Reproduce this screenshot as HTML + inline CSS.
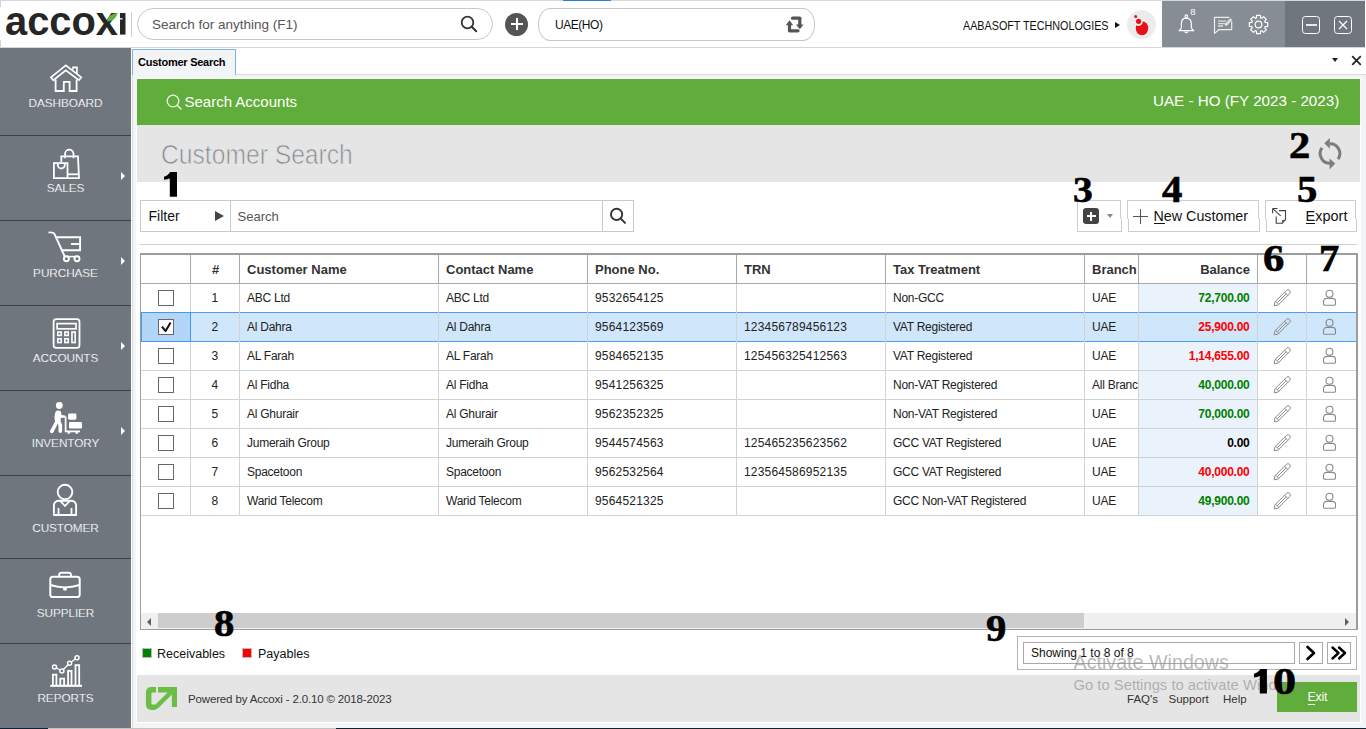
<!DOCTYPE html>
<html><head><meta charset="utf-8">
<style>
*{box-sizing:border-box;margin:0;padding:0}
html,body{width:1366px;height:729px;overflow:hidden;background:#fff;font-family:"Liberation Sans",sans-serif;color:#222}
.a{position:absolute}
.t{position:absolute;white-space:nowrap;line-height:1}
/* header */
#hdr{left:0;top:0;width:1366px;height:48px;background:#fff;border-bottom:1px solid #d6d6d6}
/* sidebar */
#side{left:0;top:48px;width:131px;height:680px;background:#6f767e}
.sep{position:absolute;left:0;width:131px;height:1px;background:#3d4247}
.slab{position:absolute;left:0;width:131px;text-align:center;color:#fff;font-size:11.8px;letter-spacing:-0.1px;-webkit-text-stroke:0.15px #6f767e;line-height:1;white-space:nowrap}
.sarr{position:absolute;left:121px;width:0;height:0;border-top:4px solid transparent;border-bottom:4px solid transparent;border-left:4px solid #fff}
.big{position:absolute;font-family:"Liberation Serif",serif;font-weight:bold;color:#000;line-height:1;white-space:nowrap;-webkit-text-stroke:0.6px #000}
.cell{position:absolute;white-space:nowrap;line-height:1;font-size:12px;letter-spacing:-0.25px;color:#222}
</style></head><body>

<!-- HEADER -->
<div id="hdr" class="a"></div>
<div class="a" style="left:0;top:0;width:1366px;height:1px;background:#d9d9d9"></div>
<div class="a" style="left:563px;top:0;width:48px;height:1px;background:#2d7fd6"></div>
<div class="a" style="left:0;top:0;width:1px;height:7px;background:#d4d4d4"></div><div class="a" style="left:0;top:40px;width:1px;height:7px;background:#d4d4d4"></div>

<!-- logo -->
<svg class="a" style="left:0;top:0" width="135" height="47" viewBox="0 0 135 47">
  <text x="5" y="34.6" font-family="Liberation Sans" font-weight="bold" font-size="41" fill="#262626" textLength="113" lengthAdjust="spacingAndGlyphs">accox</text>
  <path d="M120 13 h5.5 v21.6 h-5.5 z" fill="#262626"/><rect x="119.5" y="18.2" width="3" height="1.3" fill="#fff"/>
  <path d="M107 21.5 C108 16 112 13.5 117.5 13 C116.5 18 113 21 107 21.5 Z" fill="#5fb23e"/>
</svg>
<div class="a" style="left:131px;top:12px;width:1px;height:25px;background:#cfcfcf"></div>
<!-- search pill -->
<div class="a" style="left:137px;top:8px;width:356px;height:32px;border:1px solid #c8c8c8;border-radius:16px"></div>
<div class="t" style="left:152px;top:18px;font-size:13.5px;color:#555">Search for anything (F1)</div>
<svg class="a" style="left:458px;top:14px" width="22" height="22" viewBox="0 0 22 22"><circle cx="9.5" cy="8.5" r="5.8" fill="none" stroke="#333" stroke-width="1.8"/><path d="M13.8 12.8 L18.2 17.3" stroke="#333" stroke-width="2" stroke-linecap="round"/></svg>
<!-- plus circle -->
<div class="a" style="left:505px;top:13px;width:23px;height:23px;border-radius:50%;background:#555"></div>
<div class="a" style="left:510.5px;top:23.3px;width:12px;height:2px;background:#fff"></div>
<div class="a" style="left:515.5px;top:18.3px;width:2px;height:12px;background:#fff"></div>
<!-- branch pill -->
<div class="a" style="left:538px;top:8px;width:277px;height:33px;border:1px solid #c8c8c8;border-radius:12px/16px"></div>
<div class="t" style="left:555px;top:19px;font-size:12px;letter-spacing:-0.45px;color:#111">UAE(HO)</div>
<svg class="a" style="left:784px;top:15px" width="24" height="20" viewBox="0 0 24 20">
  <path d="M5.5 16.5 V9.5" stroke="#555" stroke-width="3.2" fill="none"/>
  <path d="M5.5 15.8 H14" stroke="#555" stroke-width="3.2" stroke-linecap="round" fill="none"/>
  <path d="M1.8 10.2 L5.5 5.3 L9.2 10.2 Z" fill="#555"/>
  <path d="M15.8 3.2 V10" stroke="#555" stroke-width="3.2" fill="none"/>
  <path d="M8.5 3.2 H15.8" stroke="#555" stroke-width="3.2" stroke-linecap="round" fill="none"/>
  <path d="M12 9.5 L15.8 14.3 L19.5 9.5 Z" fill="#555"/>
</svg>
<!-- company -->
<div class="t" style="left:962.5px;top:19.5px;font-size:12px;color:#111;transform:scaleX(0.897);transform-origin:left top">AABASOFT TECHNOLOGIES</div>
<div class="a" style="left:1115px;top:22px;width:0;height:0;border-top:3.5px solid transparent;border-bottom:3.5px solid transparent;border-left:5px solid #111"></div>
<div class="a" style="left:1126.5px;top:10px;width:29px;height:29px;border-radius:50%;background:#ececec"></div>
<svg class="a" style="left:1126px;top:10px" width="30" height="30" viewBox="0 0 30 30">
  <ellipse cx="16" cy="18.3" rx="6.2" ry="7" fill="#e8111a"/>
  <circle cx="12.4" cy="11.6" r="4.4" fill="#ececec"/>
  <circle cx="12.6" cy="11.3" r="2.6" fill="#e8111a"/>
  <circle cx="9.7" cy="6.4" r="1.5" fill="#e8111a"/>
</svg>
<!-- right icon bar -->
<div class="a" style="left:1162px;top:1px;width:123px;height:46px;background:#868d94"></div>
<div class="a" style="left:1285px;top:1px;width:80px;height:46px;background:#6f767e"></div>
<svg class="a" style="left:1174px;top:6px" width="26" height="30" viewBox="0 0 26 30">
  <circle cx="12.3" cy="10.2" r="1.3" fill="none" stroke="#fff" stroke-width="1.1"/>
  <path d="M12.3 12.2 C9 12.2 7.4 14.5 7.4 17.5 V21.3 C7.4 22.6 5.3 24.5 5.1 24.7 H19.7 C19.5 24.5 17.3 22.6 17.3 21.3 V17.5 C17.3 14.5 15.6 12.2 12.3 12.2 Z" fill="none" stroke="#fff" stroke-width="1.2" stroke-linejoin="round"/>
  <path d="M10.8 25.2 A1.5 1.5 0 0 0 13.8 25.2" fill="none" stroke="#fff" stroke-width="1.1"/>
  <text x="16.2" y="8.8" font-family="Liberation Sans" font-size="9.5" fill="#fff">8</text>
</svg>
<svg class="a" style="left:1212px;top:15px" width="24" height="22" viewBox="0 0 24 22">
  <path d="M19.7 6.5 V14.7 H6.8 L2.5 18.4 V2.3 H17.3" fill="none" stroke="#eee" stroke-width="1.2" stroke-linejoin="round"/>
  <path d="M6 6.2 H14 M6 8.6 H13 M6 11 H11" stroke="#ddd" stroke-width="1.3"/>
  <path d="M14.3 10.3 L19.3 5.2 A1 1 0 0 0 18.3 4.2 L13.3 9.3 Z" fill="none" stroke="#eee" stroke-width="1.2" stroke-linejoin="round"/>
</svg>
<svg class="a" style="left:1247px;top:13px" width="23" height="23" viewBox="0 0 23 23">
  <path d="M8.82 5.03 L9.45 4.81 L9.55 2.31 L13.45 2.31 L13.55 4.81 L14.18 5.03 L14.79 5.32 L16.62 3.62 L19.38 6.38 L17.68 8.21 L17.97 8.82 L18.19 9.45 L20.69 9.55 L20.69 13.45 L18.19 13.55 L17.97 14.18 L17.68 14.79 L19.38 16.62 L16.62 19.38 L14.79 17.68 L14.18 17.97 L13.55 18.19 L13.45 20.69 L9.55 20.69 L9.45 18.19 L8.82 17.97 L8.21 17.68 L6.38 19.38 L3.62 16.62 L5.32 14.79 L5.03 14.18 L4.81 13.55 L2.31 13.45 L2.31 9.55 L4.81 9.45 L5.03 8.82 L5.32 8.21 L3.62 6.38 L6.38 3.62 L8.21 5.32 Z" fill="none" stroke="#fff" stroke-width="1.2" stroke-linejoin="round"/>
  <circle cx="11.5" cy="11.5" r="3.3" fill="none" stroke="#fff" stroke-width="1.2"/>
</svg>
<div class="a" style="left:1302px;top:16px;width:18px;height:18px;border:1.5px solid #fff;border-radius:3.5px"></div>
<div class="a" style="left:1305.5px;top:24px;width:11px;height:2px;background:#e8e8e8"></div>
<div class="a" style="left:1334px;top:16px;width:18px;height:18px;border:1.5px solid #fff;border-radius:3.5px"></div>
<svg class="a" style="left:1334px;top:16px" width="18" height="18" viewBox="0 0 18 18"><path d="M5 5 L13 13 M13 5 L5 13" stroke="#fff" stroke-width="1.2"/></svg>



<!-- CONTENT FRAME -->
<div class="a" style="left:131px;top:48px;width:1235px;height:27px;background:#fff"></div>
<div class="a" style="left:132px;top:74px;width:1234px;height:1px;background:#dcdcdc"></div>
<div class="a" style="left:132px;top:49px;width:104px;height:26px;background:#f3f4f6;border:1px solid #7fb2ea;border-bottom:none"></div>
<div class="t" style="left:138px;top:57px;font-size:11px;font-weight:bold;letter-spacing:-0.25px;color:#000">Customer Search</div>
<div class="a" style="left:1332px;top:58px;width:0;height:0;border-left:3.5px solid transparent;border-right:3.5px solid transparent;border-top:4px solid #222"></div>
<svg class="a" style="left:1350px;top:54px" width="13" height="13" viewBox="0 0 13 13"><path d="M2.2 2.2 L10.8 10.8 M10.8 2.2 L2.2 10.8" stroke="#222" stroke-width="1.7"/></svg>
<div class="a" style="left:132px;top:75px;width:1234px;height:653px;background:#f3f4f6;border-left:1px solid #dcdcdc"></div>
<div class="a" style="left:136px;top:78px;width:1225px;height:645px;background:#fff"></div>
<div class="a" style="left:131px;top:728px;width:205px;height:1px;background:#c4c4c4"></div>
<div class="a" style="left:0px;top:728px;width:48px;height:1px;background:#0d2233"></div><div class="a" style="left:48px;top:728px;width:83px;height:1px;background:#c4c4c4"></div>
<div class="a" style="left:336px;top:728px;width:1030px;height:1px;background:#0d2233"></div>

<!-- green bar -->
<div class="a" style="left:137px;top:79px;width:1223px;height:46px;background:#60ad3b"></div>
<svg class="a" style="left:164px;top:93px" width="20" height="20" viewBox="0 0 20 20"><circle cx="9" cy="8" r="5.8" fill="none" stroke="#eef7e8" stroke-width="1.3"/><path d="M13.2 12.2 L17 16" stroke="#eef7e8" stroke-width="1.4" stroke-linecap="round"/></svg>
<div class="t" style="left:184.5px;top:94px;font-size:15px;color:#fff">Search Accounts</div>
<div class="t" style="left:1153px;top:93.3px;font-size:15.2px;color:#fff">UAE - HO (FY 2023 - 2023)</div>

<!-- title panel -->
<div class="a" style="left:137px;top:125px;width:1223px;height:57px;background:#e5e5e5"></div>
<div class="t" style="left:161px;top:142px;font-size:26.8px;color:#858b92;transform:scaleX(0.92);transform-origin:left top;-webkit-text-stroke:0.7px #e5e5e5">Customer Search</div>
<svg class="a" style="left:1312px;top:134px" width="36" height="40" viewBox="0 0 36 40">
  <path d="M17.6 9.7 A9.8 9.8 0 0 1 26.03 25.12" fill="none" stroke="#7c7c7c" stroke-width="3"/>
  <path d="M9.97 13.88 A9.8 9.8 0 0 0 18.4 29.3" fill="none" stroke="#7c7c7c" stroke-width="3"/>
  <path d="M12.3 9.3 L17.8 4 V14.8 Z" fill="#7c7c7c"/>
  <path d="M23.2 29.6 L17.6 24.5 V35.5 Z" fill="#7c7c7c"/>
</svg>

<!-- filter bar -->
<div class="a" style="left:140px;top:200px;width:494px;height:32px;border:1px solid #c9c9c9"></div>
<div class="a" style="left:230px;top:200px;width:1px;height:32px;background:#c9c9c9"></div>
<div class="a" style="left:602px;top:200px;width:1px;height:32px;background:#c9c9c9"></div>
<div class="t" style="left:148.5px;top:208.5px;font-size:14px;color:#111">Filter</div>
<div class="a" style="left:215px;top:211px;width:0;height:0;border-top:5px solid transparent;border-bottom:5px solid transparent;border-left:9px solid #444"></div>
<div class="t" style="left:237.5px;top:209.5px;font-size:13px;color:#555">Search</div>
<svg class="a" style="left:606px;top:204px" width="24" height="24" viewBox="0 0 24 24"><circle cx="10.6" cy="10.4" r="5.6" fill="none" stroke="#333" stroke-width="1.9"/><path d="M14.8 14.6 L19 18.9" stroke="#333" stroke-width="2" stroke-linecap="round"/></svg>

<!-- toolbar buttons -->
<div class="a" style="left:1077px;top:200px;width:44px;height:19px;border:1px solid #cdcdcd;border-bottom:none"></div><div class="a" style="left:1077px;top:219px;width:45px;height:13px;border:1px solid #cdcdcd;border-top:none;border-left-color:#cdcdcd"></div>
<div class="a" style="left:1083px;top:208px;width:16px;height:16px;border-radius:3px;background:#444"></div>
<div class="a" style="left:1086.5px;top:214.8px;width:9px;height:2.6px;background:#fff"></div>
<div class="a" style="left:1089.7px;top:211.5px;width:2.6px;height:9px;background:#fff"></div>
<div class="a" style="left:1107px;top:214px;width:0;height:0;border-left:3.5px solid transparent;border-right:3.5px solid transparent;border-top:4px solid #888"></div>

<div class="a" style="left:1127px;top:200px;width:132px;height:19px;border:1px solid #cdcdcd;border-bottom:none"></div><div class="a" style="left:1128px;top:219px;width:132px;height:13px;border:1px solid #cdcdcd;border-top:none"></div>
<div class="a" style="left:1133px;top:215.5px;width:15px;height:1px;background:#555"></div>
<div class="a" style="left:1140px;top:208.5px;width:1px;height:15px;background:#555"></div>
<div class="t" style="left:1153.5px;top:208.5px;font-size:14.3px;color:#111">New Customer</div>
<div class="a" style="left:1154px;top:223px;width:11px;height:1px;background:#111"></div>

<div class="a" style="left:1265px;top:200px;width:91px;height:19px;border:1px solid #cdcdcd;border-bottom:none"></div><div class="a" style="left:1266px;top:219px;width:91px;height:13px;border:1px solid #cdcdcd;border-top:none"></div>
<svg class="a" style="left:1270px;top:206px" width="20" height="20" viewBox="0 0 20 20">
  <path d="M10.7 9.8 L2.8 2.7 M2.6 2.5 H7.6 M2.6 2.5 V7.3" fill="none" stroke="#444" stroke-width="1.1"/>
  <path d="M8.9 4.6 H15.5 V13.4 L12.4 17.3 H6.2 V10.4" fill="none" stroke="#444" stroke-width="1.1"/>
  <path d="M12.4 17.3 V14.4 H15.4" fill="none" stroke="#444" stroke-width="0.9"/>
</svg>
<div class="t" style="left:1305.5px;top:208.5px;font-size:14.5px;color:#111">Export</div>
<div class="a" style="left:1306px;top:223px;width:9px;height:1px;background:#111"></div>
<div class="a" style="left:140px;top:244px;width:1217px;height:1px;background:#cfcfcf"></div>


<!-- TABLE -->
<div class="a" style="left:140px;top:253px;width:1218px;height:377px;border:2px solid #9c9c9c;border-top-width:2px;border-bottom-width:1px;border-left-width:1px;border-right-width:2px"></div>
<div class="a" style="left:1139px;top:284px;width:118px;height:231px;background:#eaf2fb"></div>
<div class="a" style="left:141px;top:312px;width:1215px;height:30px;background:#d0e6fb;border-top:1px solid #4a9ff0;border-bottom:1px solid #4a9ff0"></div>
<div class="a" style="left:141px;top:313px;width:49px;height:28px;background:#b3d5f8"></div>
<div class="a" style="left:141px;top:283px;width:1215px;height:1px;background:#a8a8a8"></div>
<div class="a" style="left:141px;top:370px;width:1215px;height:1px;background:#d2d2d2"></div>
<div class="a" style="left:141px;top:399px;width:1215px;height:1px;background:#d2d2d2"></div>
<div class="a" style="left:141px;top:428px;width:1215px;height:1px;background:#d2d2d2"></div>
<div class="a" style="left:141px;top:457px;width:1215px;height:1px;background:#d2d2d2"></div>
<div class="a" style="left:141px;top:486px;width:1215px;height:1px;background:#d2d2d2"></div>
<div class="a" style="left:141px;top:515px;width:1215px;height:1px;background:#d2d2d2"></div>
<div class="a" style="left:190px;top:255px;width:1px;height:28px;background:#a8a8a8"></div>
<div class="a" style="left:190px;top:284px;width:1px;height:231px;background:#d2d2d2"></div>
<div class="a" style="left:239px;top:255px;width:1px;height:28px;background:#a8a8a8"></div>
<div class="a" style="left:239px;top:284px;width:1px;height:231px;background:#d2d2d2"></div>
<div class="a" style="left:438px;top:255px;width:1px;height:28px;background:#a8a8a8"></div>
<div class="a" style="left:438px;top:284px;width:1px;height:231px;background:#d2d2d2"></div>
<div class="a" style="left:587px;top:255px;width:1px;height:28px;background:#a8a8a8"></div>
<div class="a" style="left:587px;top:284px;width:1px;height:231px;background:#d2d2d2"></div>
<div class="a" style="left:736px;top:255px;width:1px;height:28px;background:#a8a8a8"></div>
<div class="a" style="left:736px;top:284px;width:1px;height:231px;background:#d2d2d2"></div>
<div class="a" style="left:885px;top:255px;width:1px;height:28px;background:#a8a8a8"></div>
<div class="a" style="left:885px;top:284px;width:1px;height:231px;background:#d2d2d2"></div>
<div class="a" style="left:1084px;top:255px;width:1px;height:28px;background:#a8a8a8"></div>
<div class="a" style="left:1084px;top:284px;width:1px;height:231px;background:#d2d2d2"></div>
<div class="a" style="left:1138px;top:255px;width:1px;height:28px;background:#a8a8a8"></div>
<div class="a" style="left:1138px;top:284px;width:1px;height:231px;background:#d2d2d2"></div>
<div class="a" style="left:1257px;top:255px;width:1px;height:28px;background:#a8a8a8"></div>
<div class="a" style="left:1257px;top:284px;width:1px;height:231px;background:#d2d2d2"></div>
<div class="a" style="left:1306px;top:255px;width:1px;height:28px;background:#a8a8a8"></div>
<div class="a" style="left:1306px;top:284px;width:1px;height:231px;background:#d2d2d2"></div>
<div class="a" style="left:141px;top:312px;width:50px;height:30px;border:1px solid #3d9bf5"></div>
<div class="t" style="left:195.5px;width:40px;text-align:center;top:262.5px;font-size:13px;font-weight:bold;color:#333">#</div>
<div class="t" style="left:247px;top:262.5px;font-size:13px;font-weight:bold;color:#333">Customer Name</div>
<div class="t" style="left:446px;top:262.5px;font-size:13px;font-weight:bold;color:#333">Contact Name</div>
<div class="t" style="left:595px;top:262.5px;font-size:13px;font-weight:bold;color:#333">Phone No.</div>
<div class="t" style="left:744px;top:262.5px;font-size:13px;font-weight:bold;color:#333">TRN</div>
<div class="t" style="left:893px;top:262.5px;font-size:13px;font-weight:bold;color:#333">Tax Treatment</div>
<div class="t" style="left:1092px;top:262.5px;font-size:13px;font-weight:bold;color:#333">Branch</div>
<div class="t" style="right:116px;top:262.5px;font-size:13px;font-weight:bold;color:#333">Balance</div>
<div class="a" style="left:158px;top:290px;width:16px;height:16px;border:1px solid #666;background:#fff"></div>
<div class="cell" style="letter-spacing:0.2px;left:195px;width:40px;text-align:center;top:292.0px">1</div>
<div class="cell" style="left:247px;top:292.0px">ABC Ltd</div>
<div class="cell" style="left:446px;top:292.0px">ABC Ltd</div>
<div class="cell" style="letter-spacing:0.2px;left:595px;top:292.0px">9532654125</div>
<div class="cell" style="left:893px;top:292.0px">Non-GCC</div>
<div class="cell" style="left:1092px;top:292.0px">UAE</div>
<div class="cell" style="right:116.5px;top:292.0px;font-weight:bold;color:#008000">72,700.00</div>
<svg class="a" style="left:1273px;top:289px" width="18" height="18" viewBox="0 0 18 18"><path d="M1.9 12.9 L13.4 1.4 A2.26 2.26 0 0 1 16.6 4.6 L5.1 16.1 L1.2 16.8 Z M11.6 3.2 L14.8 6.4 M2.6 12.2 L5.8 15.4 M4.3 13.7 L13.2 4.8" fill="none" stroke="#8a8a8a" stroke-width="1" stroke-linejoin="round"/></svg>
<svg class="a" style="left:1321px;top:289px" width="17" height="18" viewBox="0 0 17 18"><circle cx="8.5" cy="4.7" r="3.5" fill="none" stroke="#848a90" stroke-width="1.1"/><path d="M5.5 9.4 H11.5 A3 3 0 0 1 14.5 12.4 V15 A1.3 1.3 0 0 1 13.2 16.3 H3.8 A1.3 1.3 0 0 1 2.5 15 V12.4 A3 3 0 0 1 5.5 9.4 Z" fill="none" stroke="#848a90" stroke-width="1.1"/></svg>
<div class="a" style="left:158px;top:319px;width:16px;height:16px;border:1px solid #666;background:#fff"></div>
<svg class="a" style="left:158px;top:319px" width="16" height="16" viewBox="0 0 16 16"><path d="M3.9 7.6 L7.6 12 L12.6 3.6" fill="none" stroke="#111" stroke-width="2" stroke-linejoin="round"/></svg>
<div class="cell" style="letter-spacing:0.2px;left:195px;width:40px;text-align:center;top:321.0px">2</div>
<div class="cell" style="left:247px;top:321.0px">Al Dahra</div>
<div class="cell" style="left:446px;top:321.0px">Al Dahra</div>
<div class="cell" style="letter-spacing:0.2px;left:595px;top:321.0px">9564123569</div>
<div class="cell" style="letter-spacing:0.2px;left:744px;top:321.0px">123456789456123</div>
<div class="cell" style="left:893px;top:321.0px">VAT Registered</div>
<div class="cell" style="left:1092px;top:321.0px">UAE</div>
<div class="cell" style="right:116.5px;top:321.0px;font-weight:bold;color:#ff0000">25,900.00</div>
<svg class="a" style="left:1273px;top:318px" width="18" height="18" viewBox="0 0 18 18"><path d="M1.9 12.9 L13.4 1.4 A2.26 2.26 0 0 1 16.6 4.6 L5.1 16.1 L1.2 16.8 Z M11.6 3.2 L14.8 6.4 M2.6 12.2 L5.8 15.4 M4.3 13.7 L13.2 4.8" fill="none" stroke="#8a8a8a" stroke-width="1" stroke-linejoin="round"/></svg>
<svg class="a" style="left:1321px;top:318px" width="17" height="18" viewBox="0 0 17 18"><circle cx="8.5" cy="4.7" r="3.5" fill="none" stroke="#848a90" stroke-width="1.1"/><path d="M5.5 9.4 H11.5 A3 3 0 0 1 14.5 12.4 V15 A1.3 1.3 0 0 1 13.2 16.3 H3.8 A1.3 1.3 0 0 1 2.5 15 V12.4 A3 3 0 0 1 5.5 9.4 Z" fill="none" stroke="#848a90" stroke-width="1.1"/></svg>
<div class="a" style="left:158px;top:348px;width:16px;height:16px;border:1px solid #666;background:#fff"></div>
<div class="cell" style="letter-spacing:0.2px;left:195px;width:40px;text-align:center;top:350.0px">3</div>
<div class="cell" style="left:247px;top:350.0px">AL Farah</div>
<div class="cell" style="left:446px;top:350.0px">AL Farah</div>
<div class="cell" style="letter-spacing:0.2px;left:595px;top:350.0px">9584652135</div>
<div class="cell" style="letter-spacing:0.2px;left:744px;top:350.0px">125456325412563</div>
<div class="cell" style="left:893px;top:350.0px">VAT Registered</div>
<div class="cell" style="left:1092px;top:350.0px">UAE</div>
<div class="cell" style="right:116.5px;top:350.0px;font-weight:bold;color:#ff0000">1,14,655.00</div>
<svg class="a" style="left:1273px;top:347px" width="18" height="18" viewBox="0 0 18 18"><path d="M1.9 12.9 L13.4 1.4 A2.26 2.26 0 0 1 16.6 4.6 L5.1 16.1 L1.2 16.8 Z M11.6 3.2 L14.8 6.4 M2.6 12.2 L5.8 15.4 M4.3 13.7 L13.2 4.8" fill="none" stroke="#8a8a8a" stroke-width="1" stroke-linejoin="round"/></svg>
<svg class="a" style="left:1321px;top:347px" width="17" height="18" viewBox="0 0 17 18"><circle cx="8.5" cy="4.7" r="3.5" fill="none" stroke="#848a90" stroke-width="1.1"/><path d="M5.5 9.4 H11.5 A3 3 0 0 1 14.5 12.4 V15 A1.3 1.3 0 0 1 13.2 16.3 H3.8 A1.3 1.3 0 0 1 2.5 15 V12.4 A3 3 0 0 1 5.5 9.4 Z" fill="none" stroke="#848a90" stroke-width="1.1"/></svg>
<div class="a" style="left:158px;top:377px;width:16px;height:16px;border:1px solid #666;background:#fff"></div>
<div class="cell" style="letter-spacing:0.2px;left:195px;width:40px;text-align:center;top:379.0px">4</div>
<div class="cell" style="left:247px;top:379.0px">Al Fidha</div>
<div class="cell" style="left:446px;top:379.0px">Al Fidha</div>
<div class="cell" style="letter-spacing:0.2px;left:595px;top:379.0px">9541256325</div>
<div class="cell" style="left:893px;top:379.0px">Non-VAT Registered</div>
<div class="cell" style="left:1092px;top:379.0px;width:46px;overflow:hidden">All Branc</div>
<div class="cell" style="right:116.5px;top:379.0px;font-weight:bold;color:#008000">40,000.00</div>
<svg class="a" style="left:1273px;top:376px" width="18" height="18" viewBox="0 0 18 18"><path d="M1.9 12.9 L13.4 1.4 A2.26 2.26 0 0 1 16.6 4.6 L5.1 16.1 L1.2 16.8 Z M11.6 3.2 L14.8 6.4 M2.6 12.2 L5.8 15.4 M4.3 13.7 L13.2 4.8" fill="none" stroke="#8a8a8a" stroke-width="1" stroke-linejoin="round"/></svg>
<svg class="a" style="left:1321px;top:376px" width="17" height="18" viewBox="0 0 17 18"><circle cx="8.5" cy="4.7" r="3.5" fill="none" stroke="#848a90" stroke-width="1.1"/><path d="M5.5 9.4 H11.5 A3 3 0 0 1 14.5 12.4 V15 A1.3 1.3 0 0 1 13.2 16.3 H3.8 A1.3 1.3 0 0 1 2.5 15 V12.4 A3 3 0 0 1 5.5 9.4 Z" fill="none" stroke="#848a90" stroke-width="1.1"/></svg>
<div class="a" style="left:158px;top:406px;width:16px;height:16px;border:1px solid #666;background:#fff"></div>
<div class="cell" style="letter-spacing:0.2px;left:195px;width:40px;text-align:center;top:408.0px">5</div>
<div class="cell" style="left:247px;top:408.0px">Al Ghurair</div>
<div class="cell" style="left:446px;top:408.0px">Al Ghurair</div>
<div class="cell" style="letter-spacing:0.2px;left:595px;top:408.0px">9562352325</div>
<div class="cell" style="left:893px;top:408.0px">Non-VAT Registered</div>
<div class="cell" style="left:1092px;top:408.0px">UAE</div>
<div class="cell" style="right:116.5px;top:408.0px;font-weight:bold;color:#008000">70,000.00</div>
<svg class="a" style="left:1273px;top:405px" width="18" height="18" viewBox="0 0 18 18"><path d="M1.9 12.9 L13.4 1.4 A2.26 2.26 0 0 1 16.6 4.6 L5.1 16.1 L1.2 16.8 Z M11.6 3.2 L14.8 6.4 M2.6 12.2 L5.8 15.4 M4.3 13.7 L13.2 4.8" fill="none" stroke="#8a8a8a" stroke-width="1" stroke-linejoin="round"/></svg>
<svg class="a" style="left:1321px;top:405px" width="17" height="18" viewBox="0 0 17 18"><circle cx="8.5" cy="4.7" r="3.5" fill="none" stroke="#848a90" stroke-width="1.1"/><path d="M5.5 9.4 H11.5 A3 3 0 0 1 14.5 12.4 V15 A1.3 1.3 0 0 1 13.2 16.3 H3.8 A1.3 1.3 0 0 1 2.5 15 V12.4 A3 3 0 0 1 5.5 9.4 Z" fill="none" stroke="#848a90" stroke-width="1.1"/></svg>
<div class="a" style="left:158px;top:435px;width:16px;height:16px;border:1px solid #666;background:#fff"></div>
<div class="cell" style="letter-spacing:0.2px;left:195px;width:40px;text-align:center;top:437.0px">6</div>
<div class="cell" style="left:247px;top:437.0px">Jumeraih Group</div>
<div class="cell" style="left:446px;top:437.0px">Jumeraih Group</div>
<div class="cell" style="letter-spacing:0.2px;left:595px;top:437.0px">9544574563</div>
<div class="cell" style="letter-spacing:0.2px;left:744px;top:437.0px">125465235623562</div>
<div class="cell" style="left:893px;top:437.0px">GCC VAT Registered</div>
<div class="cell" style="left:1092px;top:437.0px">UAE</div>
<div class="cell" style="right:116.5px;top:437.0px;font-weight:bold;color:#000">0.00</div>
<svg class="a" style="left:1273px;top:434px" width="18" height="18" viewBox="0 0 18 18"><path d="M1.9 12.9 L13.4 1.4 A2.26 2.26 0 0 1 16.6 4.6 L5.1 16.1 L1.2 16.8 Z M11.6 3.2 L14.8 6.4 M2.6 12.2 L5.8 15.4 M4.3 13.7 L13.2 4.8" fill="none" stroke="#8a8a8a" stroke-width="1" stroke-linejoin="round"/></svg>
<svg class="a" style="left:1321px;top:434px" width="17" height="18" viewBox="0 0 17 18"><circle cx="8.5" cy="4.7" r="3.5" fill="none" stroke="#848a90" stroke-width="1.1"/><path d="M5.5 9.4 H11.5 A3 3 0 0 1 14.5 12.4 V15 A1.3 1.3 0 0 1 13.2 16.3 H3.8 A1.3 1.3 0 0 1 2.5 15 V12.4 A3 3 0 0 1 5.5 9.4 Z" fill="none" stroke="#848a90" stroke-width="1.1"/></svg>
<div class="a" style="left:158px;top:464px;width:16px;height:16px;border:1px solid #666;background:#fff"></div>
<div class="cell" style="letter-spacing:0.2px;left:195px;width:40px;text-align:center;top:466.0px">7</div>
<div class="cell" style="left:247px;top:466.0px">Spacetoon</div>
<div class="cell" style="left:446px;top:466.0px">Spacetoon</div>
<div class="cell" style="letter-spacing:0.2px;left:595px;top:466.0px">9562532564</div>
<div class="cell" style="letter-spacing:0.2px;left:744px;top:466.0px">123564586952135</div>
<div class="cell" style="left:893px;top:466.0px">GCC VAT Registered</div>
<div class="cell" style="left:1092px;top:466.0px">UAE</div>
<div class="cell" style="right:116.5px;top:466.0px;font-weight:bold;color:#ff0000">40,000.00</div>
<svg class="a" style="left:1273px;top:463px" width="18" height="18" viewBox="0 0 18 18"><path d="M1.9 12.9 L13.4 1.4 A2.26 2.26 0 0 1 16.6 4.6 L5.1 16.1 L1.2 16.8 Z M11.6 3.2 L14.8 6.4 M2.6 12.2 L5.8 15.4 M4.3 13.7 L13.2 4.8" fill="none" stroke="#8a8a8a" stroke-width="1" stroke-linejoin="round"/></svg>
<svg class="a" style="left:1321px;top:463px" width="17" height="18" viewBox="0 0 17 18"><circle cx="8.5" cy="4.7" r="3.5" fill="none" stroke="#848a90" stroke-width="1.1"/><path d="M5.5 9.4 H11.5 A3 3 0 0 1 14.5 12.4 V15 A1.3 1.3 0 0 1 13.2 16.3 H3.8 A1.3 1.3 0 0 1 2.5 15 V12.4 A3 3 0 0 1 5.5 9.4 Z" fill="none" stroke="#848a90" stroke-width="1.1"/></svg>
<div class="a" style="left:158px;top:493px;width:16px;height:16px;border:1px solid #666;background:#fff"></div>
<div class="cell" style="letter-spacing:0.2px;left:195px;width:40px;text-align:center;top:495.0px">8</div>
<div class="cell" style="left:247px;top:495.0px">Warid Telecom</div>
<div class="cell" style="left:446px;top:495.0px">Warid Telecom</div>
<div class="cell" style="letter-spacing:0.2px;left:595px;top:495.0px">9564521325</div>
<div class="cell" style="left:893px;top:495.0px">GCC Non-VAT Registered</div>
<div class="cell" style="left:1092px;top:495.0px">UAE</div>
<div class="cell" style="right:116.5px;top:495.0px;font-weight:bold;color:#008000">49,900.00</div>
<svg class="a" style="left:1273px;top:492px" width="18" height="18" viewBox="0 0 18 18"><path d="M1.9 12.9 L13.4 1.4 A2.26 2.26 0 0 1 16.6 4.6 L5.1 16.1 L1.2 16.8 Z M11.6 3.2 L14.8 6.4 M2.6 12.2 L5.8 15.4 M4.3 13.7 L13.2 4.8" fill="none" stroke="#8a8a8a" stroke-width="1" stroke-linejoin="round"/></svg>
<svg class="a" style="left:1321px;top:492px" width="17" height="18" viewBox="0 0 17 18"><circle cx="8.5" cy="4.7" r="3.5" fill="none" stroke="#848a90" stroke-width="1.1"/><path d="M5.5 9.4 H11.5 A3 3 0 0 1 14.5 12.4 V15 A1.3 1.3 0 0 1 13.2 16.3 H3.8 A1.3 1.3 0 0 1 2.5 15 V12.4 A3 3 0 0 1 5.5 9.4 Z" fill="none" stroke="#848a90" stroke-width="1.1"/></svg>
<div class="a" style="left:141px;top:613px;width:1215px;height:16px;background:#f0f0f0"></div>
<div class="a" style="left:158px;top:613px;width:926px;height:15px;background:#cdcdcd"></div>
<div class="a" style="left:147px;top:618px;width:0;height:0;border-top:4px solid transparent;border-bottom:4px solid transparent;border-right:4px solid #606060"></div>
<div class="a" style="left:1345px;top:618px;width:0;height:0;border-top:4px solid transparent;border-bottom:4px solid transparent;border-left:4px solid #606060"></div>


<!-- LEGEND -->
<div class="a" style="left:142px;top:648px;width:10px;height:10px;background:#008000;border:1px solid #bbb"></div>
<div class="t" style="left:157px;top:647.5px;font-size:12.5px;color:#111">Receivables</div>
<div class="a" style="left:242px;top:648px;width:10px;height:10px;background:#ff0000;border:1px solid #bbb"></div>
<div class="t" style="left:258px;top:647.5px;font-size:12.5px;color:#111">Payables</div>

<!-- PAGER -->
<div class="a" style="left:1017px;top:636px;width:340px;height:34px;border:1px solid #b4b4b4"></div>
<div class="a" style="left:1023px;top:642px;width:272px;height:22px;border:1px solid #a9a9a9"></div>
<div class="t" style="left:1031px;top:647px;font-size:12px;color:#111">Showing 1 to 8 of 8</div>
<div class="a" style="left:1299px;top:642px;width:24px;height:22px;border:1px solid #a9a9a9"></div>
<svg class="a" style="left:1299px;top:642px" width="25" height="22" viewBox="0 0 25 22"><path d="M8.5 5 L15 11 L8.5 17" fill="none" stroke="#000" stroke-width="2.6" stroke-linecap="round" stroke-linejoin="round"/></svg>
<div class="a" style="left:1327px;top:642px;width:24px;height:22px;border:1px solid #a9a9a9"></div>
<svg class="a" style="left:1327px;top:642px" width="24" height="22" viewBox="0 0 24 22"><path d="M5.5 5.5 L11.5 11 L5.5 16.5 M12 5.5 L18 11 L12 16.5" fill="none" stroke="#000" stroke-width="2.4" stroke-linecap="round" stroke-linejoin="round"/></svg>

<!-- FOOTER -->
<div class="a" style="left:137px;top:675px;width:1223px;height:47px;background:#e5e5e5"></div>
<svg class="a" style="left:145px;top:686px" width="33" height="25" viewBox="0 0 33 25">
  <path d="M11 0.9 H6.5 Q0.9 0.9 0.9 6.5 V18.3 Q0.9 23.9 6.5 23.9 H9 Q11.5 23.9 13.3 22.1 L26.9 8.5 V21.1 H32 V0.9 H13 V6.4 H22.5 L10.5 18.4 H7.6 Q6.4 18.4 6.4 17.2 V7.6 Q6.4 6.4 7.6 6.4 H11 Z" fill="#6abd45"/>
</svg>
<div class="t" style="left:188px;top:694px;font-size:11.5px;letter-spacing:-0.15px;color:#333">Powered by Accoxi - 2.0.10 &copy; 2018-2023</div>
<div class="t" style="left:1127px;top:694px;font-size:11.5px;color:#333">FAQ's</div>
<div class="t" style="left:1168.5px;top:694px;font-size:11.5px;color:#333">Support</div>
<div class="t" style="left:1223px;top:694px;font-size:11.5px;color:#333">Help</div>
<div class="a" style="left:1277px;top:682px;width:80px;height:30px;background:#60ad3b"></div>
<div class="t" style="left:1307.5px;top:690.5px;font-size:12.3px;letter-spacing:-0.2px;color:#fff">Exit</div>
<div class="a" style="left:1308px;top:704px;width:7px;height:1px;background:#fff"></div>

<!-- WATERMARK -->
<div class="t" style="left:1073.5px;top:653px;font-size:19.7px;color:rgba(140,140,140,0.62)">Activate Windows</div>
<div class="t" style="left:1073.5px;top:677.5px;font-size:14.8px;color:rgba(140,140,140,0.62)">Go to Settings to activate Windows.</div>

<!-- BIG NUMBERS -->
<svg class="a" style="left:163px;top:171px" width="16" height="27" viewBox="0 0 16 27"><path d="M7.2 0.9 H14 V25.8 H6.8 V7.6 C5 8.2 3 8.7 1 8.8 V5.8 C3.8 5 5.8 3 7.2 0.9 Z" fill="#000"/></svg>
<div class="big" style="left:1289px;top:127px;font-size:37px;transform:scaleX(1.15);transform-origin:left top">2</div>
<div class="big" style="left:1073px;top:172px;font-size:36px;transform:scaleX(1.1);transform-origin:left top">3</div>
<div class="big" style="left:1162px;top:171px;font-size:37px;transform:scaleX(1.1);transform-origin:left top">4</div>
<div class="big" style="left:1297px;top:171px;font-size:37px;transform:scaleX(1.1);transform-origin:left top">5</div>
<div class="big" style="left:1263px;top:240px;font-size:37px;transform:scaleX(1.15);transform-origin:left top">6</div>
<div class="big" style="left:1319px;top:240px;font-size:37px;transform:scaleX(1.1);transform-origin:left top">7</div>
<div class="big" style="left:214px;top:605px;font-size:37px;transform:scaleX(1.1);transform-origin:left top">8</div>
<div class="big" style="left:986px;top:610px;font-size:37px;transform:scaleX(1.1);transform-origin:left top">9</div>
<svg class="a" style="left:1253px;top:668px" width="16" height="27" viewBox="0 0 16 27"><path d="M7.5 1 H13.9 V25.6 H6.8 V8 C5 8.7 3 9.3 1 9.5 V5.8 C3.8 5 5.9 3.2 7.5 1 Z" fill="#000"/></svg><div class="big" style="left:1273px;top:663px;font-size:37px;transform:scaleX(1.25);transform-origin:left top">0</div>

<!-- SIDEBAR -->
<div id="side" class="a"></div>
<div class="sep" style="top:135px"></div>
<div class="sep" style="top:220px"></div>
<div class="sep" style="top:305px"></div>
<div class="sep" style="top:390px"></div>
<div class="sep" style="top:475px"></div>
<div class="sep" style="top:558px"></div>
<div class="sep" style="top:643px"></div>
<div class="slab" style="top:97.8px">DASHBOARD</div>
<div class="slab" style="top:182.8px">SALES</div>
<div class="slab" style="top:267.8px">PURCHASE</div>
<div class="slab" style="top:352.8px">ACCOUNTS</div>
<div class="slab" style="top:437.8px">INVENTORY</div>
<div class="slab" style="top:522.8px">CUSTOMER</div>
<div class="slab" style="top:607.8px">SUPPLIER</div>
<div class="slab" style="top:692.8px">REPORTS</div>
<div class="sarr" style="top:172px"></div>
<div class="sarr" style="top:257px"></div>
<div class="sarr" style="top:342px"></div>
<div class="sarr" style="top:427px"></div>

<svg class="a" style="left:48px;top:62px" width="36" height="32" viewBox="0 0 36 32">
  <path d="M17.8 3.3 L2.9 15.3 L5.3 18.2 L17.8 8.4 L30.9 18.2 L33.3 15.3 Z" fill="none" stroke="#fff" stroke-width="1.7" stroke-linejoin="miter"/>
  <path d="M25 7.6 V5.3 H28.9 V11.6" fill="none" stroke="#fff" stroke-width="1.7"/>
  <path d="M7.6 17.5 V29 H15.8 V19.8 H21.6 V29 H28.6 V17.5" fill="none" stroke="#fff" stroke-width="1.8"/>
</svg>
<svg class="a" style="left:50px;top:146px" width="32" height="36" viewBox="0 0 32 36">
  <path d="M11.3 16.3 V10.4 H28 L29 32.1 H17.5" fill="none" stroke="#fff" stroke-width="1.8"/>
  <path d="M15.1 12.2 V7.9 A4.2 4.2 0 0 1 23.5 7.9 V12.2" fill="none" stroke="#fff" stroke-width="1.8"/>
  <path d="M3.9 17.2 H17.5 V32.1 H3.9 Z" fill="none" stroke="#fff" stroke-width="1.8"/>
  <path d="M7.8 17.2 V19 A3.5 3.5 0 0 0 14.8 19 V17.2" fill="none" stroke="#fff" stroke-width="1.8"/>
  <path d="M17.5 28.3 H28.8" stroke="#fff" stroke-width="1.8"/>
</svg>
<svg class="a" style="left:48px;top:229px" width="36" height="36" viewBox="0 0 36 36">
  <path d="M1.3 3.4 C3.5 3.3 5.6 3.5 6.5 5 L16.5 27" fill="none" stroke="#fff" stroke-width="1.9" stroke-linecap="round"/>
  <path d="M8.4 8.3 H32.1 V21.3 H14.2" fill="none" stroke="#fff" stroke-width="1.9"/>
  <path d="M22.9 15 H32.1" stroke="#fff" stroke-width="1.9"/>
  <path d="M16.5 27.6 H30" stroke="#fff" stroke-width="1.6"/>
  <circle cx="18.4" cy="29.8" r="2.5" fill="#6f767e" stroke="#fff" stroke-width="1.9"/>
  <circle cx="29" cy="29.8" r="2.5" fill="#6f767e" stroke="#fff" stroke-width="1.9"/>
</svg>
<svg class="a" style="left:50px;top:316px" width="32" height="34" viewBox="0 0 32 34">
  <rect x="3.6" y="3.2" width="25.9" height="28.6" rx="2.6" fill="none" stroke="#fff" stroke-width="1.8"/>
  <rect x="7.1" y="7.6" width="18.9" height="5.2" fill="none" stroke="#fff" stroke-width="1.7"/>
  <rect x="7.75" y="16.05" width="3.4" height="3.4" fill="none" stroke="#fff" stroke-width="1.6"/>
  <rect x="14.85" y="16.05" width="3.4" height="3.4" fill="none" stroke="#fff" stroke-width="1.6"/>
  <rect x="7.75" y="22.75" width="3.4" height="3.8" fill="none" stroke="#fff" stroke-width="1.6"/>
  <rect x="14.85" y="22.75" width="3.4" height="3.8" fill="none" stroke="#fff" stroke-width="1.6"/>
  <rect x="21.95" y="16.05" width="3.2" height="10.5" fill="none" stroke="#fff" stroke-width="1.6"/>
</svg>
<svg class="a" style="left:49px;top:402px" width="36" height="34" viewBox="0 0 36 34">
  <circle cx="10.3" cy="3.5" r="3.4" fill="#fff"/>
  <path d="M6.8 9.3 C8 8.3 10.8 8.2 11.8 9.6 L12.6 13 L16.2 13.6 V15.6 L11.6 16 L11.8 19.5 L6.3 20 C5.2 17.5 5.2 13 6.8 9.3 Z" fill="#fff"/>
  <path d="M8 19.5 L2.8 29.3" stroke="#fff" stroke-width="3.6" stroke-linecap="round"/>
  <path d="M9.6 19.5 L11.3 23 L11.3 29.3" fill="none" stroke="#fff" stroke-width="3.6" stroke-linecap="round" stroke-linejoin="round"/>
  <path d="M16.6 14.5 V29.4 H31" fill="none" stroke="#fff" stroke-width="1.7"/>
  <rect x="19.1" y="11.5" width="8.3" height="6.2" rx="1.4" fill="#fff"/>
  <rect x="20" y="19.9" width="13" height="6.7" rx="1.4" fill="#fff"/>
  <circle cx="19.8" cy="30.6" r="1.4" fill="#fff"/><circle cx="27.8" cy="30.6" r="1.4" fill="#fff"/>
</svg>
<svg class="a" style="left:50px;top:483px" width="32" height="36" viewBox="0 0 32 36">
  <circle cx="15" cy="9" r="7.3" fill="none" stroke="#fff" stroke-width="1.9"/>
  <path d="M3.9 32 V22.3 A4.6 4.6 0 0 1 8.5 17.7 H21.5 A4.6 4.6 0 0 1 26.1 22.3 V32 Z" fill="none" stroke="#fff" stroke-width="1.9" stroke-linejoin="round"/>
  <path d="M10 17.7 L15 23 L20 17.7" fill="none" stroke="#fff" stroke-width="1.8"/>
  <path d="M8.5 25 V32 M21.5 25 V32" stroke="#fff" stroke-width="1.8"/>
</svg>
<svg class="a" style="left:48px;top:570px" width="36" height="32" viewBox="0 0 36 32">
  <rect x="2.3" y="6.8" width="29.4" height="20.2" rx="2.6" fill="none" stroke="#fff" stroke-width="2"/>
  <path d="M11.2 6.8 V5 A2.2 2.2 0 0 1 13.4 2.8 H20.8 A2.2 2.2 0 0 1 23 5 V6.8" fill="none" stroke="#fff" stroke-width="1.9"/>
  <path d="M2.5 15 Q17 19.8 31.5 15" fill="none" stroke="#fff" stroke-width="1.9"/>
  <rect x="15.1" y="16.8" width="3.8" height="3.6" rx="1" fill="#fff"/>
</svg>
<svg class="a" style="left:49px;top:654px" width="36" height="34" viewBox="0 0 36 34">
  <path d="M1.2 31.8 H33" stroke="#fff" stroke-width="2.1"/>
  <path d="M3.9 31 V20.7 H7.4 V31" fill="none" stroke="#fff" stroke-width="1.8"/>
  <path d="M11.3 31 V24.7 H15.1 V31" fill="none" stroke="#fff" stroke-width="1.8"/>
  <path d="M19.1 31 V16.9 H22.5 V31" fill="none" stroke="#fff" stroke-width="1.8"/>
  <path d="M26.5 31 V11.1 H30.2 V31" fill="none" stroke="#fff" stroke-width="1.8"/>
  <path d="M5.5 13 L12.9 17 L20.6 9.3 L28 3.7" fill="none" stroke="#fff" stroke-width="1.4"/>
  <circle cx="5.5" cy="13" r="2" fill="#6f767e" stroke="#fff" stroke-width="1.5"/>
  <circle cx="12.9" cy="17" r="2" fill="#6f767e" stroke="#fff" stroke-width="1.5"/>
  <circle cx="20.6" cy="9.3" r="2" fill="#6f767e" stroke="#fff" stroke-width="1.5"/>
  <circle cx="28" cy="3.7" r="2" fill="#6f767e" stroke="#fff" stroke-width="1.5"/>
</svg>
</body></html>
